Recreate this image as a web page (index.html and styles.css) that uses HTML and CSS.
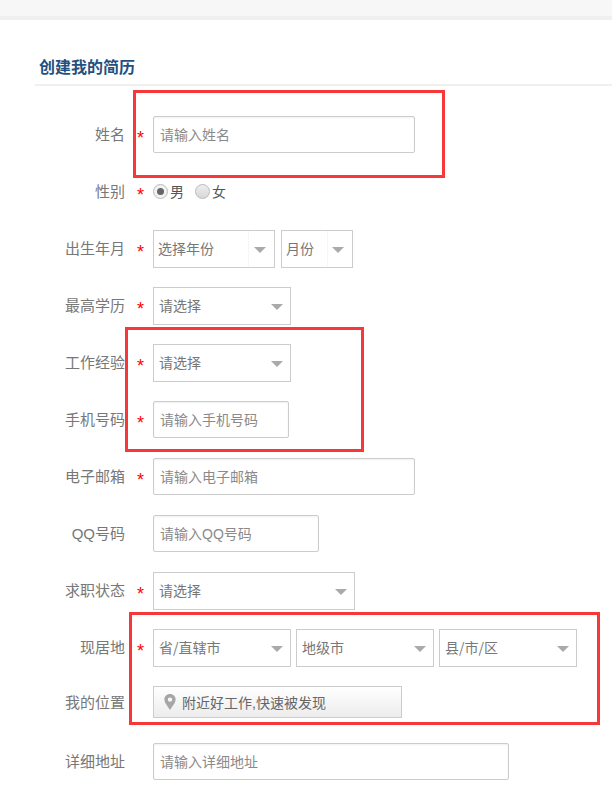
FILE: index.html
```html
<!DOCTYPE html>
<html lang="zh-CN">
<head>
  <meta charset="UTF-8">
  <title>创建我的简历</title>
  <link rel="stylesheet" href="styles.css">
</head>
<body>

  <div class="topbar"></div>

  <h2 class="title">创建我的简历</h2>

  <form class="resume">
    <div class="row">
      <label class="name">姓名</label>
      <span class="star">*</span>
      <input class="text w262" type="text" placeholder="请输入姓名">
    </div>

    <div class="row">
      <label class="name">性别</label>
      <span class="star">*</span>
      <span class="radio on"></span><span class="radio-text">男</span>
      <span class="radio"></span><span class="radio-text">女</span>
    </div>

    <div class="row">
      <label class="name">出生年月</label>
      <span class="star">*</span>
      <div class="select year"><span class="inner">选择年份</span></div>
      <div class="select month"><span class="inner">月份</span></div>
    </div>

    <div class="row">
      <label class="name">最高学历</label>
      <span class="star">*</span>
      <div class="select w138">请选择</div>
    </div>

    <div class="row">
      <label class="name">工作经验</label>
      <span class="star">*</span>
      <div class="select w138">请选择</div>
    </div>

    <div class="row">
      <label class="name">手机号码</label>
      <span class="star">*</span>
      <input class="text w136" type="text" placeholder="请输入手机号码">
    </div>

    <div class="row">
      <label class="name">电子邮箱</label>
      <span class="star">*</span>
      <input class="text w262" type="text" placeholder="请输入电子邮箱">
    </div>

    <div class="row">
      <label class="name">QQ号码</label>
      <span class="star"></span>
      <input class="text w166" type="text" placeholder="请输入QQ号码">
    </div>

    <div class="row">
      <label class="name">求职状态</label>
      <span class="star">*</span>
      <div class="select w202">请选择</div>
    </div>

    <div class="row">
      <label class="name">现居地</label>
      <span class="star">*</span>
      <div class="select w138">省/直辖市</div>
      <div class="select w138">地级市</div>
      <div class="select w138">县/市/区</div>
    </div>

    <div class="row row-short">
      <label class="name">我的位置</label>
      <span class="star"></span>
      <div class="locate">
        <svg class="pin" width="12" height="16" viewBox="0 0 12 16">
          <path fill-rule="evenodd" fill="#a6a6a6" d="M6 0C2.700 0 .4 2.400.4 5.500.4 9 4 12.500 6 16c2-3.500 5.600-7 5.600-10.500C11.600 2.400 9.300 0 6 0zm0 3.400a2.200 2.200 0 1 1 0 4.400 2.200 2.200 0 0 1 0-4.400z"/>
        </svg>
        附近好工作,快速被发现
      </div>
    </div>

    <div class="row">
      <label class="name">详细地址</label>
      <span class="star"></span>
      <input class="text w356" type="text" placeholder="请输入详细地址">
    </div>
  </form>

  <!-- red marks drawn over the form -->
  <div class="mark mark-1"></div>
  <div class="mark mark-2"></div>
  <div class="mark mark-3"></div>

</body>
</html>
```

FILE: styles.css
```css
html, body {
  height: 792px;
  overflow: hidden;
}
body {
  margin: 0;
  position: relative;
  background: #fff;
  font-family: "Liberation Sans", "Noto Sans CJK SC", sans-serif;
  font-size: 14px;
  color: #777;
}
.topbar {
  height: 16px;
  background: #f7f7f7;
  border-bottom: 4px solid #f0f0f0;
}
.title {
  margin: 0 0 0 35px;
  padding: 37px 0 5px 4px;
  height: 22px;
  line-height: 22px;
  font-size: 16px;
  font-weight: bold;
  color: #24507f;
  border-bottom: 2px solid #f0f0f0;
}
.resume {
  padding-top: 30px;
}
.row {
  display: flex;
  align-items: center;
  height: 37px;
  margin-bottom: 20px;
}
.row-short {
  height: 32px;
  margin-bottom: 25px;
}
.name {
  width: 125px;
  margin-top: -2px;
  text-align: right;
  flex: none;
  font-size: 15px;
}
.star {
  width: 28px;
  flex: none;
  padding: 7px 0 0 12px;
  box-sizing: border-box;
  color: #f00;
  font-size: 18px;
  line-height: 1;
}
.text {
  box-sizing: border-box;
  height: 37px;
  padding: 0 6px;
  border: 1px solid #ccc;
  border-radius: 2px;
  box-shadow: inset 0 1px 2px #f0f0f0;
  font: inherit;
  color: #777;
}
.text::placeholder {
  color: #8a8a8a;
  opacity: 1;
}
.w136 { width: 136px; }
.w166 { width: 166px; }
.w262 { width: 262px; }
.w356 { width: 356px; }
.select {
  position: relative;
  box-sizing: border-box;
  height: 38px;
  line-height: 34px;
  padding-left: 5px;
  margin-right: 5px;
  border: 1px solid #ccc;
  background: #fff;
  font-family: "Noto Sans CJK SC", sans-serif;
}
.select::after {
  content: "";
  position: absolute;
  top: 16px;
  right: 7px;
  border-top: 6px solid #aaa;
  border-left: 6px solid transparent;
  border-right: 6px solid transparent;
}
.w138 { width: 138px; }
.w202 { width: 202px; }
.year { width: 122px; margin-right: 6px; padding-left: 4px; }
.month { width: 72px; padding-left: 4px; }
.inner {
  display: block;
  height: 36px;
  border-right: 1px solid #f6f6f6;
}
.year .inner { width: 90px; }
.month .inner { width: 41px; }
.year::after, .month::after { right: 8px; }
.radio {
  position: relative;
  box-sizing: border-box;
  width: 15px;
  height: 15px;
  border: 1px solid #bbb;
  border-radius: 50%;
  background: linear-gradient(#eee, #d8d8d8);
}
.radio.on {
  background: #f2f2f2;
}
.radio.on::after {
  content: "";
  position: absolute;
  left: 3px;
  top: 3px;
  width: 7px;
  height: 7px;
  border-radius: 50%;
  background: #666;
}
.radio-text {
  margin: -2px 11px 0 2px;
  color: #555;
}
.locate {
  display: flex;
  align-items: center;
  box-sizing: border-box;
  width: 249px;
  height: 32px;
  padding-left: 10px;
  border: 1px solid #ccc;
  background: linear-gradient(#fff, #ececec);
  color: #666;
}
.pin {
  margin-right: 6px;
}
.mark {
  position: absolute;
  box-sizing: border-box;
  border: 3px solid #f73838;
}
.mark-1 {
  left: 133px;
  top: 90px;
  width: 312px;
  height: 88px;
}
.mark-2 {
  left: 125px;
  top: 327px;
  width: 239px;
  height: 125px;
}
.mark-3 {
  left: 129px;
  top: 612px;
  width: 471px;
  height: 113px;
}
```
